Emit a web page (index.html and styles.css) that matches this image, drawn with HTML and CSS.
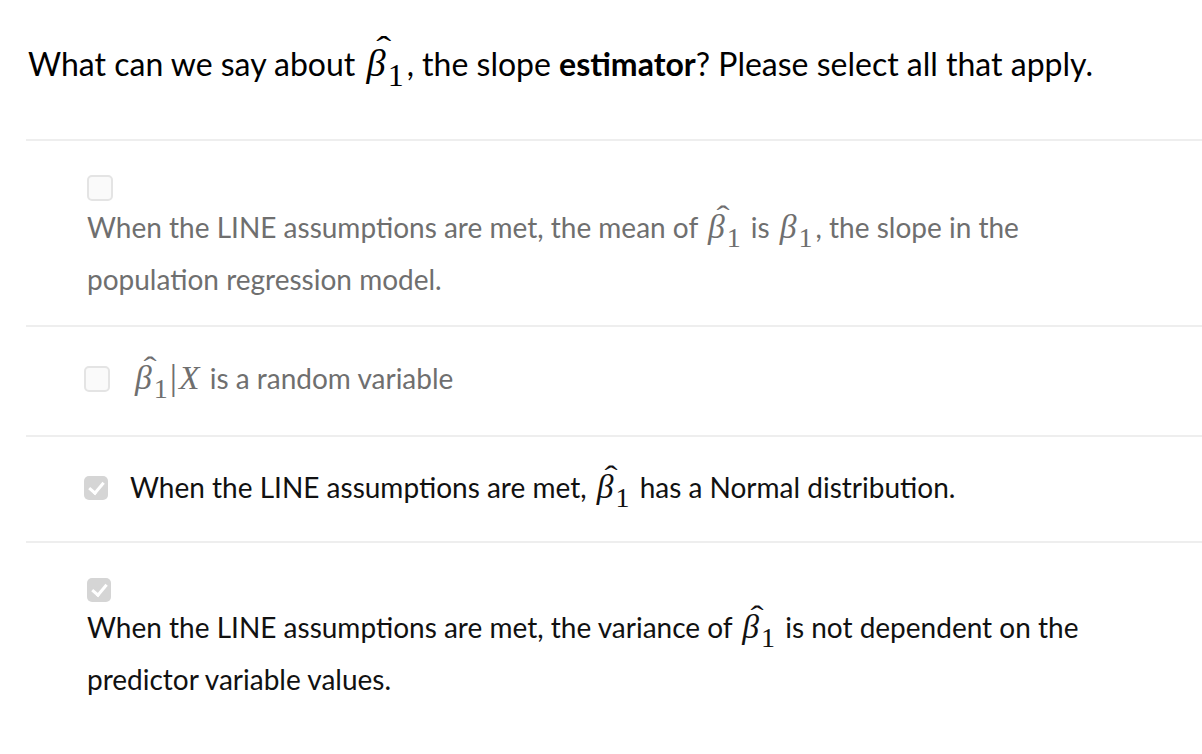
FILE: index.html
```html
<!DOCTYPE html>
<html lang="en">
<head>
    <meta charset="UTF-8">
    <meta name="viewport" content="width=device-width, initial-scale=1.0">
    <title>Quiz question</title>
    <link rel="stylesheet" href="styles.css">
</head>
<body>
    <div class="question">
        <p class="prompt">
            What can we say about <span class="math"><span class="beta hat">β</span><span class="sub">1</span></span>, the slope <strong>estimator</strong>? Please select all that apply.
        </p>
        <ul class="answers">
            <li class="answer stacked muted">
                <span class="box"></span>
                <div class="label">
                    When the LINE assumptions are met, the mean of <span class="math"><span class="beta hat">β</span><span class="sub">1</span></span> is <span class="math"><span class="beta">β</span><span class="sub">1</span></span>, the slope in the<br>
                    population regression model.
                </div>
            </li>
            <li class="answer inline muted">
                <span class="box"></span>
                <div class="label">
                    <span class="math"><span class="beta hat">β</span><span class="sub">1</span><span class="bar">|</span><span class="var">X</span></span> is a random variable
                </div>
            </li>
            <li class="answer inline short">
                <span class="box checked"></span>
                <div class="label">
                    When the LINE assumptions are met, <span class="math"><span class="beta hat">β</span><span class="sub">1</span></span> has a Normal distribution.
                </div>
            </li>
            <li class="answer stacked last">
                <span class="box checked"></span>
                <div class="label">
                    When the LINE assumptions are met, the variance of <span class="math"><span class="beta hat">β</span><span class="sub">1</span></span> is not dependent on the<br>
                    predictor variable values.
                </div>
            </li>
        </ul>
    </div>
</body>
</html>
```

FILE: styles.css
```css
body {
    margin: 0;
    background: #fff;
    font-family: 'Lato', 'Open Sans', sans-serif;
    color: #111;
}
.question {
    padding: 38px 0 0 0;
}
.prompt {
    margin: 0 0 0 28px;
    font-size: 32px;
    line-height: 50px;
    color: #000;
}
.prompt strong {
    font-weight: 700;
}
.answers {
    list-style: none;
    margin: 49px 0 0 26px;
    padding: 0;
}
.answer {
    border-top: 2px solid #eeeeee;
    font-size: 28px;
    line-height: 50px;
}
.answer.inline {
    display: flex;
    align-items: center;
    gap: 22px;
    padding: 25px 0 30px 58px;
}
.answer.short {
    padding-bottom: 27px;
}
.answer.stacked {
    padding: 34px 0 21px 61px;
}
.answer.last {
    padding-top: 35px;
}
.answer.stacked .box {
    display: block;
    margin-bottom: 1px;
}
.answer.last .box {
    margin-bottom: 0;
}
.muted {
    color: #6f6f6f;
}
.box {
    width: 22px;
    height: 22px;
    border: 2px solid #e4e4e4;
    border-radius: 5px;
    background: #fafafa;
    position: relative;
    flex-shrink: 0;
}
.box.checked {
    width: 24px;
    height: 24px;
    border: none;
    background: #d5d5d5;
}
.box.checked::after {
    content: "";
    position: absolute;
    left: 8px;
    top: 3px;
    width: 6px;
    height: 12px;
    border: solid #fff;
    border-width: 0 3.5px 3.5px 0;
    transform: rotate(40deg);
}
.math {
    font-family: 'Liberation Serif', 'DejaVu Serif', serif;
    white-space: nowrap;
    margin: 0 3px;
}
.beta {
    font-style: italic;
    font-size: 1.2em;
    position: relative;
}
.hat::before {
    content: "ˆ";
    font-style: normal;
    position: absolute;
    left: 0.32em;
    top: -0.55em;
    font-size: 0.9em;
    transform: scaleX(1.3);
}
.sub {
    font-size: 1em;
    position: relative;
    top: 0.32em;
    margin-left: 2px;
}
.bar {
    font-size: 1.3em;
    margin: 0 2px;
}
.var {
    font-style: italic;
    font-size: 1.2em;
}
```
